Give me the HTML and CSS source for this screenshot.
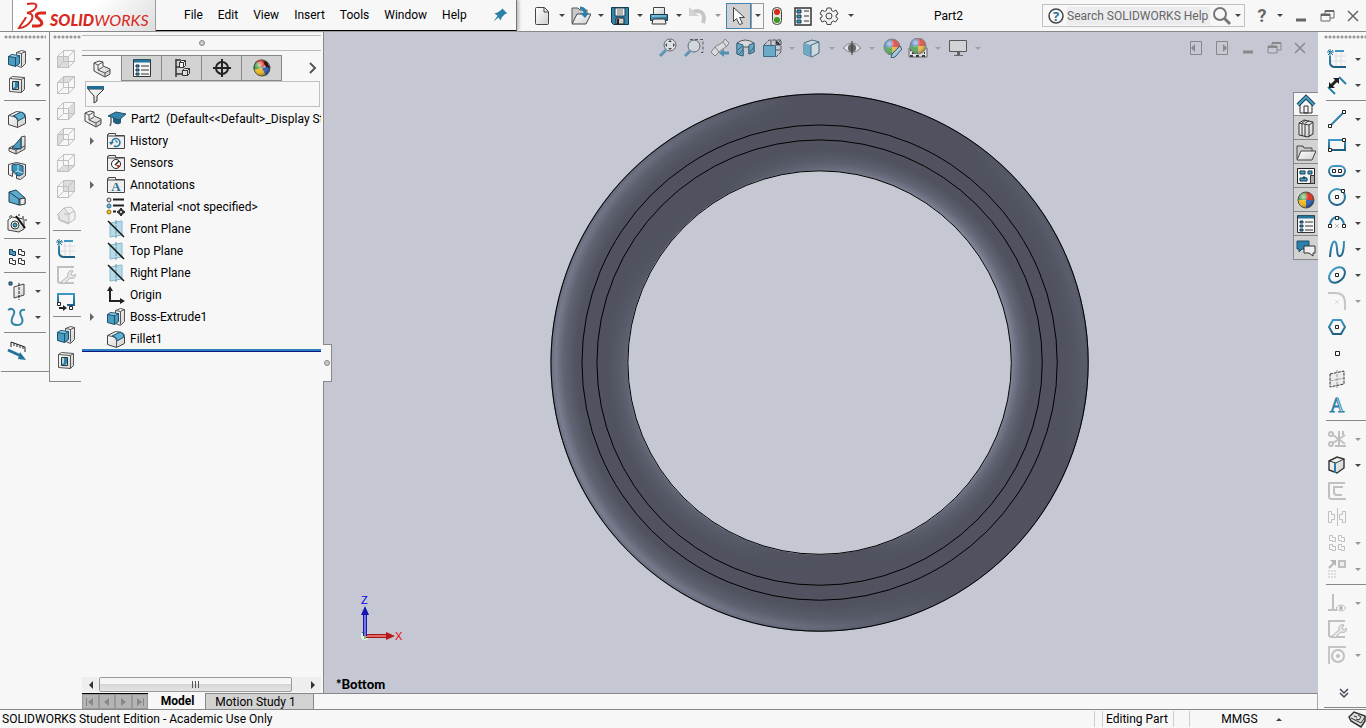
FILE: index.html
```html
<!DOCTYPE html>
<html lang="en">
<head>
  <meta charset="UTF-8" />
  <meta name="viewport" content="width=device-width, initial-scale=1.0"/>
  <title>Part2 - SOLIDWORKS</title>
  <link rel="stylesheet" href="styles.css">
</head>
<body>

<!-- icon sprite -->
<svg class="sprite" xmlns="http://www.w3.org/2000/svg">
  <defs>
    <linearGradient id="g-blue" x1="0" y1="0" x2="1" y2="1"><stop offset="0" stop-color="#5fb0d2"/><stop offset="1" stop-color="#1c6488"/></linearGradient>
    <linearGradient id="g-grey" x1="0" y1="0" x2="1" y2="1"><stop offset="0" stop-color="#ffffff"/><stop offset="1" stop-color="#cfcfcf"/></linearGradient>
    <linearGradient id="g-line" x1="0" y1="0" x2="0" y2="1"><stop offset="0" stop-color="#3f97c2"/><stop offset="1" stop-color="#1d5f83"/></linearGradient>
    <radialGradient id="g-shine" cx=".35" cy=".3" r=".7"><stop offset="0" stop-color="#fff" stop-opacity=".7"/><stop offset=".5" stop-color="#fff" stop-opacity="0"/><stop offset="1" stop-color="#000" stop-opacity=".35"/></radialGradient>
  </defs>

  <symbol id="i-extrude" viewBox="0 0 20 20">
    <path d="M9.500 3.500l5-2 4 1v12l-4 4-5-2z" fill="url(#g-grey)" stroke="#555"/><path d="M14.500 4.500v13M14.500 4.500l4-2M14.500 4.500l-5-1" fill="none" stroke="#555"/>
    <path d="M1.500 7.500l3-2 8 1v8l-4 3-7-2z" fill="#4a9dc1" stroke="#1d4f69"/><path d="M1.500 7.500l7 1 4-2M8.500 8.500v9" fill="none" stroke="#1d4f69"/><path d="M3 7l2-1 6 1-2 1z" fill="#9dd3e8"/>
  </symbol>
  <symbol id="i-cut" viewBox="0 0 20 20">
    <path d="M2.500 3.500l3-2 12 1v12l-3 3-12-1z" fill="url(#g-grey)" stroke="#555"/><path d="M2.500 3.500l12 1 3-2M14.500 4.500v13" fill="none" stroke="#555"/>
    <path d="M5.500 6.500h6v8h-6z" fill="#a9d5e6" stroke="#333"/><path d="M8 7h3v5l-2 2H6v-1l2-1z" fill="#2f83aa"/>
  </symbol>
  <symbol id="i-fillet" viewBox="0 0 20 20">
    <path d="M1.500 6.500l8-4 6 1q3 1 3 4v7l-8 4-9-3z" fill="url(#g-grey)" stroke="#444"/><path d="M1.500 6.500l5 1q4 1 4 4v7" fill="none" stroke="#555"/>
    <path d="M6 7l8-4q4 1 4 5l-7 4q0-4-5-5z" fill="#5fb0d2" stroke="#1d4f69"/>
  </symbol>
  <symbol id="i-rib" viewBox="0 0 20 20">
    <path d="M14 2l4-1v13l-9 5-7-3v-3l4-2 8 1z" fill="url(#g-grey)" stroke="#444"/><path d="M2 13l7 2 9-4M9 15v4" fill="none" stroke="#444"/><path d="M14 3v11l-9-1z" fill="#4a9dc1" stroke="#173f55"/>
  </symbol>
  <symbol id="i-shell" viewBox="0 0 20 20">
    <path d="M1.500 3.500l8-2 9 2v11l-5 4-4-1v-5l-4-1v4l-4-2z" fill="url(#g-grey)" stroke="#444"/><path d="M5 4l5-1 6 2v8l-4 2-3-1v-3l-4-1z" fill="#3c93b9" stroke="#1d4f69"/><path d="M11 4v6l5 2M11 10l-3 1" fill="none" stroke="#bfe1ee"/>
  </symbol>
  <symbol id="i-draft" viewBox="0 0 20 20">
    <path d="M2 5l7-2 9 8v6l-6 1-10-3z" fill="#5fabcc" stroke="#173f55"/><path d="M2 5l10 7 6-1M12 12v6" fill="none" stroke="#173f55"/><path d="M13 12l5-1v6l-5 1z" fill="#eee" stroke="#444"/>
  </symbol>
  <symbol id="i-wizard" viewBox="0 0 20 20">
    <path d="M1 7l4-3 12 2v10l-5 3-11-2z" fill="url(#g-grey)" stroke="#444"/><circle cx="8" cy="12" r="4" fill="#fff" stroke="#333"/><circle cx="8" cy="12" r="2" fill="#4b9fc4" stroke="#173f55"/>
    <path d="M9 3l9 12" stroke="#111" stroke-width="2"/><path d="M4 2v2M12 1v2M16 3v2M18 7h2M2 4h1" stroke="#222"/>
  </symbol>
  <symbol id="i-pattern" viewBox="0 0 20 20">
    <path d="M11.500 2.500h3v2h3v4h-3v-1h-3zM2.500 11.500h3v2h3v4h-3v-1h-3zM11.500 11.500h3v2h3v4h-3v-1h-3z" fill="none" stroke="#333"/>
    <path d="M2.500 2.500h3v2h3v4h-3v-1h-3z" fill="#4b9fc4" stroke="#173f55"/>
  </symbol>
  <symbol id="i-skpattern" viewBox="0 0 20 20">
    <path d="M2.500 2.500h3v2h3v4h-3v-1h-3zM11.500 2.500h3v2h3v4h-3v-1h-3zM2.500 11.500h3v2h3v4h-3v-1h-3zM11.500 11.500h3v2h3v4h-3v-1h-3z" fill="none" stroke="#c0c0c0"/>
  </symbol>
  <symbol id="i-refgeo" viewBox="0 0 20 20">
    <path d="M2 1h3v3H2z" fill="#3c93b9" stroke="#173f55"/><path d="M7 6l10-3v11L7 17z" fill="url(#g-grey)" stroke="#444"/><path d="M12 2v17" stroke="#222" stroke-dasharray="3 1"/>
  </symbol>
  <symbol id="i-curve" viewBox="0 0 20 20">
    <path d="M1 3c5-3 8 1 5 6-3 6-1 9 4 9 7 0 6-6 4-9-2-4 0-7 4-6" fill="none" stroke="#3584a9" stroke-width="2"/>
  </symbol>
  <symbol id="i-instant" viewBox="0 0 20 20">
    <path d="M4 6V1l14 5v5M7 2v3M10 3v3M13 4v3M16 5v3" fill="none" stroke="#222"/><path d="M1 9l13 6" stroke="#23759c" stroke-width="3"/><path d="M11 18l2-7 6 8z" fill="#23759c"/>
  </symbol>
  <symbol id="i-wire" viewBox="0 0 20 20">
    <path d="M1.500 7.500h11v11h-11zM7.500 1.500h11v11h-11zM1.500 7.500l6-6M12.500 7.500l6-6M1.500 18.500l6-6M12.500 18.500l6-6" fill="none" stroke="#c0c0c0"/>
  </symbol>
  <symbol id="i-iso" viewBox="0 0 20 20">
    <path d="M2 9l6-6 7-1 4 5v7l-7 5-9-4z" fill="#f1f1f1" stroke="#bdbdbd"/><path d="M2 9l6-6 5 6v9l-9-3z" fill="#e4e4e4" stroke="#bdbdbd"/><path d="M8 9h5M13 9l5-3" stroke="#bdbdbd"/>
  </symbol>
  <symbol id="i-sketch" viewBox="0 0 20 20">
    <path d="M7 7h12M4 12h15M9 3v15M14 3v15" stroke="#dcdcdc"/><path d="M8 2h9M3 7v6q0 5 5 5h11" fill="none" stroke="url(#g-line)" stroke-width="2"/><path d="M3 0v7M0 3h7M1 1l5 5M6 1L1 6" stroke="#23759c"/>
  </symbol>
  <symbol id="i-repair" viewBox="0 0 20 20">
    <path d="M18 2H2v14q0 2 3 2h13" fill="none" stroke="#c0c0c0" stroke-width="2"/><path d="M5 17l7-6c-1-4 2-6 5-5l-2 3 2 2 3-2c0 4-3 5-6 4l-6 6z" fill="#e6e6e6" stroke="#b5b5b5"/>
  </symbol>
  <symbol id="i-convert" viewBox="0 0 20 20">
    <path d="M2 12V3h16v11h-7" fill="none" stroke="url(#g-line)" stroke-width="2"/><path d="M1.500 11.500h3v3h-3zM13.500 15.500h3v3h-3z" fill="#fff" stroke="#222"/><path d="M3 17h5" stroke="#222" stroke-width="2"/><path d="M7 14l4 3-4 3z" fill="#222"/>
  </symbol>
  <symbol id="i-dim" viewBox="0 0 20 20">
    <path d="M12 2l7 7M1 12l7 7" stroke="#2a80a8" stroke-width="2"/><path d="M4 11l6-6" stroke="#222" stroke-width="3"/><path d="M6 3h6v6zM2 7v6h6z" fill="#222"/>
  </symbol>
  <symbol id="i-line" viewBox="0 0 20 20">
    <path d="M3 17L17 3" stroke="#2a80a8" stroke-width="2"/><path d="M1.500 15.500h3v3h-3zM15.500 1.500h3v3h-3z" fill="#fff" stroke="#222"/>
  </symbol>
  <symbol id="i-rect" viewBox="0 0 20 20">
    <path d="M2 5h16v10H2z" fill="none" stroke="url(#g-line)" stroke-width="2"/><path d="M1.500 13.500h3v3h-3zM15.500 3.500h3v3h-3z" fill="#fff" stroke="#222"/>
  </symbol>
  <symbol id="i-slot" viewBox="0 0 20 20">
    <rect x="2" y="5" width="16" height="10" rx="5" fill="none" stroke="url(#g-line)" stroke-width="2"/><path d="M5.500 8.500h3v3h-3zM11.500 8.500h3v3h-3z" fill="#fff" stroke="#222"/>
  </symbol>
  <symbol id="i-circle" viewBox="0 0 20 20">
    <circle cx="10" cy="10" r="8" fill="none" stroke="url(#g-line)" stroke-width="2"/><path d="M8.500 8.500h3v3h-3zM14.500 2.500h3v3h-3z" fill="#fff" stroke="#222"/>
  </symbol>
  <symbol id="i-arc" viewBox="0 0 20 20">
    <path d="M3 13C3 1 17 1 17 13" fill="none" stroke="#2a80a8" stroke-width="2"/><path d="M1.500 11.500h3v3h-3zM15.500 11.500h3v3h-3zM8.500 3.500h3v3h-3z" fill="#fff" stroke="#222"/><path d="M8 11l4 4M12 11l-4 4" stroke="#bbb"/>
  </symbol>
  <symbol id="i-spline" viewBox="0 0 20 20">
    <path d="M3 18C4 4 7 0 9 4s0 12 3 13c4 1 5-8 5-15" fill="none" stroke="url(#g-line)" stroke-width="2"/>
  </symbol>
  <symbol id="i-ellipse" viewBox="0 0 20 20">
    <ellipse cx="10" cy="10" rx="9" ry="6.500" transform="rotate(-42 10 10)" fill="none" stroke="url(#g-line)" stroke-width="2"/><path d="M8.500 8.500h3v3h-3z" fill="#fff" stroke="#222"/>
  </symbol>
  <symbol id="i-skfillet" viewBox="0 0 20 20">
    <path d="M1 2h7q10 0 10 10v7" fill="none" stroke="#c6c6c6" stroke-width="2"/><path d="M8 9l4 4M12 9l-4 4" stroke="#ddd"/>
  </symbol>
  <symbol id="i-polygon" viewBox="0 0 20 20">
    <path d="M2 10l4-7h8l4 7-4 7H6z" fill="none" stroke="url(#g-line)" stroke-width="2"/><path d="M8.500 8.500h3v3h-3z" fill="#fff" stroke="#222"/>
  </symbol>
  <symbol id="i-point" viewBox="0 0 20 20"><path d="M8.500 8.500h4v4h-4z" fill="#fff" stroke="#222"/></symbol>
  <symbol id="i-plane" viewBox="0 0 20 20">
    <path d="M3 5l14-3v13L3 18z" fill="#ececec" stroke="#333" stroke-dasharray="3 1"/><path d="M10 1v18M3 12l14-3" stroke="#999" stroke-dasharray="3 1"/>
  </symbol>
  <symbol id="i-trim" viewBox="0 0 20 20">
    <g fill="none" stroke="#c0c0c0" stroke-width="2"><circle cx="4" cy="5" r="2"/><circle cx="4" cy="15" r="2"/><path d="M6 6l12 9M6 14l12-8M12 2v16M8 17h11M16 2v4"/></g>
  </symbol>
  <symbol id="i-box" viewBox="0 0 20 20">
    <path d="M2 6l8-4 7 2v9l-7 5-8-3z" fill="url(#g-grey)" stroke="#333" stroke-width="1.400"/><path d="M2 6l7 2 8-4" fill="none" stroke="#333"/><path d="M8 8v10" stroke="#2a80a8" stroke-width="2"/>
  </symbol>
  <symbol id="i-offset" viewBox="0 0 20 20">
    <path d="M18 2H2v14q0 2 3 2h14M16 6H7v5q0 3 3 3h5" fill="none" stroke="#c0c0c0" stroke-width="2"/>
  </symbol>
  <symbol id="i-mirror" viewBox="0 0 20 20">
    <path d="M10.500 1v18M1.500 4.500h3v3h3v5h-3v3h-3zM18.500 4.500h-3v3h-3v5h3v3h3z" fill="none" stroke="#c0c0c0"/>
  </symbol>
  <symbol id="i-move" viewBox="0 0 20 20">
    <path d="M2 9l6-6" stroke="#b5b5b5" stroke-width="2"/><path d="M3 1h6v6z" fill="#b5b5b5"/><path d="M12 2h6v6h-6z" fill="#eee" stroke="#c0c0c0" stroke-width="2"/><path d="M1 12h9M1 15h9M1 18h9" stroke="#ddd" stroke-width="2" stroke-dasharray="2 1"/>
  </symbol>
  <symbol id="i-relations" viewBox="0 0 20 20">
    <path d="M6 1v15M1 17h9" stroke="#c0c0c0" stroke-width="2"/><path d="M9 15q5-6 10 0-5 6-10 0z" fill="#fff" stroke="#bbb"/><circle cx="14" cy="15" r="2" fill="#b5b5b5"/>
  </symbol>
  <symbol id="i-snap" viewBox="0 0 20 20">
    <path d="M2 19V2h17" fill="none" stroke="#c6c6c6" stroke-width="2"/><circle cx="11" cy="11" r="6" fill="none" stroke="#c0c0c0" stroke-width="2"/><circle cx="11" cy="11" r="2" fill="#c0c0c0"/>
  </symbol>

  <symbol id="i-new" viewBox="0 0 20 20"><path d="M3.500 2.500q0-1 1-1h8l4 4v12q0 1-1 1h-11q-1 0-1-1z" fill="url(#g-grey)" stroke="#444"/><path d="M12 2v4h4" fill="none" stroke="#444"/></symbol>
  <symbol id="i-open" viewBox="0 0 20 20">
    <path d="M1 17V2h6l2 2h7v4" fill="#c9c9c9" stroke="#555"/><path d="M1 18l5-10h14l-5 10z" fill="url(#g-grey)" stroke="#444"/><path d="M9 2q5 0 5 5" fill="none" stroke="#2a80a8" stroke-width="3"/><path d="M9 7h9l-4 5z" fill="#2a80a8"/>
  </symbol>
  <symbol id="i-save" viewBox="0 0 20 20">
    <path d="M1.500 1.500h17v17h-15l-2-2z" fill="#3485ac" stroke="#143c50"/><path d="M5 2h10v8H5z" fill="#f2f2f2" stroke="#143c50"/><path d="M7 4h6M7 6h6M7 8h6" stroke="#777"/><path d="M6 12h8v6H6z" fill="#cfcfcf" stroke="#222"/><path d="M8 13v5" stroke="#222" stroke-width="2"/>
  </symbol>
  <symbol id="i-print" viewBox="0 0 20 20">
    <path d="M4.500 1.500h11v7h-11z" fill="url(#g-grey)" stroke="#444"/><path d="M1.500 8.500h17v6h-17z" fill="url(#g-blue)" stroke="#143c50"/><path d="M4 13h12l1 5H3z" fill="#eee" stroke="#333"/><path d="M3 10h14" stroke="#a4d3e6"/>
  </symbol>
  <symbol id="i-undo" viewBox="0 0 20 20"><path d="M5 6c8-3 13 2 10 11" fill="none" stroke="#c6c6c6" stroke-width="4"/><path d="M1 1v9h10z" fill="#d2d2d2"/></symbol>
  <symbol id="i-cursor" viewBox="0 0 20 20"><path d="M4.500 1.500v14l3-3 3 6 3-1-3-6h5z" fill="#fff" stroke="#444"/></symbol>
  <symbol id="i-traffic" viewBox="0 0 20 20"><rect x="5.500" y="1.500" width="9" height="17" rx="4" fill="#e3e3e3" stroke="#444"/><circle cx="10" cy="6" r="3" fill="#d62a12"/><circle cx="10" cy="14" r="3" fill="#3a9a1c"/></symbol>
  <symbol id="i-options" viewBox="0 0 20 20">
    <path d="M2 2h16v17H2z" fill="#f5f5f5" stroke="#333" stroke-width="1.500"/><path d="M4 4h4v3H4zM4 9h4v3H4zM4 14h4v3H4z" fill="#3c93b9" stroke="#173f55"/><path d="M11 5h5M11 10h5M11 15h5" stroke="#333"/>
  </symbol>
  <symbol id="i-gear" viewBox="0 0 20 20">
    <path d="M8 2h4l.5 2.500 2 1L17 4l2 4-2 1v2l2 1.500-2.500 3.500-2-1-2 1-.5 2.500H8L7.500 16l-2-1-2.500 1-2-4L3 11V9L1 8l2-4 2.500 1.500 2-1z" fill="#f2f2f2" stroke="#444"/><circle cx="10" cy="10" r="3" fill="none" stroke="#444"/>
  </symbol>
  <symbol id="i-pin" viewBox="0 0 20 20"><path d="M11 4l2-2 6 6-3 1-4 4-1 4-3-4-6 5 5-7-4-3 4-1z" fill="#2a80a8"/></symbol>
  <symbol id="i-search" viewBox="0 0 20 20"><circle cx="8" cy="8" r="6" fill="none" stroke="#777" stroke-width="2"/><path d="M12 12l6 6" stroke="#777" stroke-width="3"/></symbol>
  <symbol id="i-min" viewBox="0 0 20 20"><path d="M5 14h10" stroke="currentColor" stroke-width="3"/></symbol>
  <symbol id="i-restore" viewBox="0 0 20 20"><path d="M8 8V5h9v7h-4" fill="none" stroke="currentColor"/><path d="M4 8h9v7H4z" fill="none" stroke="currentColor"/><path d="M4 9h9M8 5h9" stroke="currentColor" stroke-width="2"/></symbol>
  <symbol id="i-close" viewBox="0 0 20 20"><path d="M5 5l10 10M15 5L5 15" stroke="currentColor" stroke-width="1.500"/></symbol>
  <symbol id="i-prevdoc" viewBox="0 0 20 20"><path d="M4.500 3.500h11v13h-11z" fill="none" stroke="currentColor"/><path d="M9 6v8l-4-4z" fill="currentColor"/></symbol>
  <symbol id="i-nextdoc" viewBox="0 0 20 20"><path d="M4.500 3.500h11v13h-11z" fill="none" stroke="currentColor"/><path d="M11 6v8l4-4z" fill="currentColor"/></symbol>

  <symbol id="i-part" viewBox="0 0 20 20">
    <path d="M2 4l5-2 4 1v4l7 3v5l-5 3-11-6z" fill="url(#g-grey)" stroke="#444"/><path d="M2 4l4 2 5-3M6 6v5l7 3 5-3M13 14v4M6 11l5-3" fill="none" stroke="#555"/>
  </symbol>
  <symbol id="i-prop" viewBox="0 0 20 20">
    <path d="M1.500 1.500h17v17h-17z" fill="#f5f5f5" stroke="#333"/><path d="M2 3h16" stroke="#23759c" stroke-width="3"/><path d="M4 7h3v2H4zM4 11h3v2H4zM4 15h3v2H4z" fill="#3c93b9" stroke="#173f55"/><path d="M9 8h8M9 12h8M9 16h8" stroke="#333"/>
  </symbol>
  <symbol id="i-config" viewBox="0 0 20 20">
    <path d="M4 1v18M4 2h5M4 9h3M4 16h6" fill="none" stroke="#333" stroke-width="1.500"/><path d="M7.500 4.500l2-2h4v5l-2 2h-4zM10.500 12.500l2-2h5v5l-2 2h-5z" fill="url(#g-grey)" stroke="#333"/><path d="M7.500 4.500h4v5M11.500 4.500l2-2M10.500 12.500h5v5M15.500 12.500l2-2" fill="none" stroke="#333"/>
  </symbol>
  <symbol id="i-target" viewBox="0 0 20 20"><circle cx="10" cy="10" r="6" fill="none" stroke="#222" stroke-width="2"/><path d="M10 1v18M1 10h18" stroke="#222" stroke-width="2"/></symbol>
  <symbol id="i-ball" viewBox="0 0 20 20">
    <path d="M10 10V2a8 8 0 0 0-8 8z" fill="#3b9a3a"/><path d="M10 10V2a8 8 0 0 1 8 8z" fill="#d9301f"/><path d="M10 10H2a8 8 0 0 0 8 8z" fill="#f0b91d"/><path d="M10 10h8a8 8 0 0 1-8 8z" fill="#2e63b8"/><circle cx="10" cy="10" r="8" fill="url(#g-shine)" stroke="#555"/>
  </symbol>
  <symbol id="i-ballscene" viewBox="0 0 20 20">
    <path d="M10 10V2a8 8 0 0 0-8 8z" fill="#3e78c4"/><path d="M10 10V2a8 8 0 0 1 8 8z" fill="#e0443a"/><path d="M10 10H2a8 8 0 0 0 8 8z" fill="#4aa44a"/><path d="M10 10h8a8 8 0 0 1-8 8z" fill="#f0b93d"/><circle cx="10" cy="10" r="8" fill="url(#g-shine)" stroke="#777"/>
  </symbol>
  <symbol id="i-ballslot" viewBox="0 0 20 20">
    <path d="M10 10L4 3q-4 5-2 9z" fill="#3b9a3a"/><path d="M10 10L4 3q7-4 12 2z" fill="#d9301f"/><path d="M10 10l-8 2q3 8 12 6z" fill="#f0b91d"/><path d="M10 10l4 8q5-4 4-10z" fill="#2e63b8"/><circle cx="10" cy="10" r="8" fill="url(#g-shine)" stroke="#555"/><path d="M11 3l4 1 3 6-4-1z" fill="#2b1513"/>
  </symbol>
  <symbol id="i-funnel" viewBox="0 0 20 20"><path d="M2 5l6 7v7l3-2v-5l7-7z" fill="url(#g-grey)" stroke="#333"/><path d="M1 3.500h17" stroke="#1f6d95" stroke-width="3"/></symbol>
  <symbol id="i-cap" viewBox="0 0 20 20"><path d="M6 9v4q4 4 8 1V9z" fill="#235f80"/><path d="M1 7l8-4 10 2-7 6z" fill="#3584a9" stroke="#1d4f69"/><path d="M4 8v6l-1 3" fill="none" stroke="#666" stroke-width="1.500"/></symbol>
  <symbol id="i-folder" viewBox="0 0 20 20"><path d="M1.500 17.500v-14h1v-1h7v2h9v13z" fill="#efefef" stroke="#444"/><path d="M2 5h16" stroke="#444"/></symbol>
  <symbol id="i-history" viewBox="0 0 20 20"><use href="#i-folder"/><path d="M6 11a4 4 0 1 1 2 4" fill="none" stroke="#23759c" stroke-width="1.500"/><path d="M3 11h5l-3 3z" fill="#23759c"/><path d="M10 9v2h2" fill="none" stroke="#23759c"/></symbol>
  <symbol id="i-sensor" viewBox="0 0 20 20"><use href="#i-folder"/><circle cx="10" cy="11" r="4.500" fill="#fff" stroke="#222"/><path d="M9 12l4-4" stroke="#222" stroke-width="1.500"/><path d="M10 12h4l-2 3z" fill="#d63a1c"/></symbol>
  <symbol id="i-material" viewBox="0 0 20 20">
    <circle cx="3" cy="3" r="2" fill="#ddd" stroke="#444"/><circle cx="3" cy="9" r="2" fill="#74bade" stroke="#2a6a8a"/><circle cx="3" cy="15" r="2" fill="#f2c522" stroke="#8a6a11"/><path d="M7 2.500h11M7 8.500h11M7 14.500h3" stroke="#222" stroke-width="2"/><circle cx="15" cy="15" r="2" fill="#fff" stroke="#333" stroke-width="2"/><path d="M15 11v2M15 17v2M11 15h2M17 15h2" stroke="#333" stroke-width="2"/>
  </symbol>
  <symbol id="i-datum" viewBox="0 0 20 20"><path d="M4 4l12-2v14L4 18z" fill="#b4dbe9" stroke="#86b8cb"/><path d="M10 1v18" stroke="#78909a" stroke-dasharray="4 1"/><path d="M2 2l16 16" stroke="#111" stroke-width="1.500"/></symbol>
  <symbol id="i-origin" viewBox="0 0 20 20"><path d="M4 4v12h12" fill="none" stroke="#222" stroke-width="2"/><path d="M1 6l3-5 3 5zM14 13l5 3-5 3z" fill="#222"/></symbol>

  <symbol id="i-zoomfit" viewBox="0 0 20 20"><circle cx="12" cy="7" r="6" fill="#dfe4ea" stroke="#555"/><path d="M12 2l2 2h-4zM12 12l2-2h-4zM7 7l2-2v4zM17 7l-2-2v4z" fill="#333"/><path d="M8 12l-6 6" stroke="#4d8fb2" stroke-width="3"/></symbol>
  <symbol id="i-zoomarea" viewBox="0 0 20 20"><path d="M6 1.500h13v13h-4" fill="none" stroke="#444" stroke-dasharray="3 2"/><circle cx="10" cy="8" r="6" fill="#d4dce3" stroke="#555"/><path d="M6 13l-5 5" stroke="#4d8fb2" stroke-width="3"/></symbol>
  <symbol id="i-prevview" viewBox="0 0 20 20"><path d="M1 14l4-5 8-5 2-3 4 4-2 3-7 5-5 5z" fill="#dedede" stroke="#777"/><path d="M5 9l4 5M13 4l3 4" stroke="#777"/><path d="M12 15h7" stroke="#3c86ab" stroke-width="3"/><path d="M14 11v8l-5-4z" fill="#3c86ab"/></symbol>
  <symbol id="i-section" viewBox="0 0 20 20"><path d="M1 5q8-6 17 0v9l-5 2V9H7v9l-6-2z" fill="#dcdcdc" stroke="#444"/><path d="M1 5l6 2v11l-6-2zM18 5l-5 2v9l5-2z" fill="#5ca5c6" stroke="#1c546f"/><path d="M2 12l4-4M3 16l4-4M14 14l4-5" stroke="#1c546f"/></symbol>
  <symbol id="i-orient" viewBox="0 0 20 20"><path d="M2 7l5-5h12v12l-5 5" fill="none" stroke="#444" stroke-dasharray="4 1"/><path d="M9 2v5M14 7l5-5M14 2v5h5M14 12h5" stroke="#444"/><path d="M1.500 7.500h12v11h-12z" fill="#5ca5c6" stroke="#245d78"/></symbol>
  <symbol id="i-display" viewBox="0 0 20 20"><path d="M2 5l8-3 7 2v11l-7 4-8-3z" fill="#cfdde4" stroke="#34596b"/><path d="M2 5l7 2v12l-7-3z" fill="#5ca5c6"/><path d="M9 7l8-3M9 7v12" stroke="#34596b"/></symbol>
  <symbol id="i-eye" viewBox="0 0 20 20"><path d="M1 10q9-10 18 0-9 9-18 0z" fill="#e4e4e4" stroke="#777"/><circle cx="10" cy="10" r="4" fill="#555"/><path d="M10 3v14" stroke="#222"/></symbol>
  <symbol id="i-appear" viewBox="0 0 20 20"><use href="#i-ballscene" y="-1"/><path d="M18 8l2 3-7 8-4 1 1-4z" fill="#9bc9dd" stroke="#244b5d"/></symbol>
  <symbol id="i-scene" viewBox="0 0 20 20"><path d="M1 10h18v9H1z" fill="#e7e7e7" stroke="#555"/><path d="M2 12h16M4 15h13M2 18h16" stroke="#222" stroke-width="2" stroke-dasharray="3 3"/><use href="#i-ballscene" y="-2"/></symbol>
  <symbol id="i-monitor" viewBox="0 0 20 20"><path d="M1.500 2.500h17v11h-17z" fill="#d5d5d5" stroke="#444"/><path d="M9 14h3v3H9zM6 17h9v1H6z" fill="#555"/></symbol>

  <symbol id="i-home" viewBox="0 0 20 20"><path d="M4 10v9h12v-9l-6-6z" fill="#f5f5f5" stroke="#333"/><path d="M8 12h4v7H8z" fill="none" stroke="#333"/><path d="M2 11l8-8 8 8" fill="none" stroke="#153f55" stroke-width="4"/><path d="M2 11l8-8 8 8" fill="none" stroke="#4b9fc4" stroke-width="2"/></symbol>
  <symbol id="i-library" viewBox="0 0 20 20"><path d="M3 5l5-3 9 2v12l-5 3-9-2z" fill="url(#g-grey)" stroke="#333"/><path d="M3 5l10 2 4-3M6 6v12M9 6v13M13 7v12M6 5l4-3M9 5l4-2" fill="none" stroke="#333"/></symbol>
  <symbol id="i-files" viewBox="0 0 20 20"><path d="M1 17V4h6l1 2h8v3" fill="#ccc" stroke="#444"/><path d="M1 18l4-9h15l-4 9z" fill="url(#g-grey)" stroke="#444"/></symbol>
  <symbol id="i-palette" viewBox="0 0 20 20"><path d="M1.500 2.500h17v15h-17z" fill="#f5f5f5" stroke="#222"/><path d="M4 5h5v3H4zM12 5h4v3h-4zM4 12h7v3H4zM7 11h2v1H7z" fill="#4b9fc4" stroke="#173f55"/><path d="M14.500 9.500h4v8h-4z" fill="#aaa" stroke="#333"/></symbol>
  <symbol id="i-forum" viewBox="0 0 20 20"><path d="M1 3h12v8H6l-3 3v-3H1z" fill="#2a80a8" stroke="#1b4f68"/><path d="M8 8h11v7h-2v3l-4-3H8z" fill="#eee" stroke="#333"/></symbol>
  <symbol id="i-tag" viewBox="0 0 20 20"><path d="M2 8l5-5 11 4v5l-4 6L4 12z" fill="#ddd" stroke="#333" stroke-width="1.500"/><path d="M4 9l10 5 4-6M7 7l3 1M11 6l3 2-2 3-3-1" fill="none" stroke="#333"/></symbol>
</svg>

<header class="titlebar">
  <div class="brand">
    <svg class="brand-mark" viewBox="0 0 30 28" aria-hidden="true">
      <path d="M10 2c5-1 11-1 9 3-1 3-5 5-9 6 5 0 7 3 4 8-3 4-7 7-12 7 2-4 6-8 7-11" fill="none" stroke="#d8281e" stroke-width="2"/>
      <path d="M29 11h-5c-5 0-6 3-3 5l3 3c2 3 0 5-4 5h-5" fill="none" stroke="#d8281e" stroke-width="3"/>
    </svg>
    <span class="brand-name"><b>SOLID</b>WORKS</span>
  </div>
  <nav class="menu">
    <button>File</button><button>Edit</button><button>View</button><button>Insert</button><button>Tools</button><button>Window</button><button>Help</button>
    <button class="pin" aria-label="Pin menu"><svg><use href="#i-pin"/></svg></button>
  </nav>
  <div class="quick">
    <button aria-label="New"><svg><use href="#i-new"/></svg></button><button class="drop" aria-label="New options"></button>
    <button aria-label="Open"><svg><use href="#i-open"/></svg></button><button class="drop" aria-label="Open options"></button>
    <button aria-label="Save"><svg><use href="#i-save"/></svg></button><button class="drop" aria-label="Save options"></button>
    <button aria-label="Print"><svg><use href="#i-print"/></svg></button><button class="drop" aria-label="Print options"></button>
    <button aria-label="Undo"><svg><use href="#i-undo"/></svg></button><button class="drop off" aria-label="Undo options"></button>
    <button class="picked" aria-label="Select"><svg><use href="#i-cursor"/></svg></button><button class="drop boxed" aria-label="Select options"></button>
    <button class="wide" aria-label="Rebuild"><svg><use href="#i-traffic"/></svg></button>
    <button class="wide" aria-label="File properties"><svg><use href="#i-options"/></svg></button>
    <button class="wide" aria-label="Options"><svg><use href="#i-gear"/></svg></button><button class="drop" aria-label="More options"></button>
  </div>
  <h1 class="doc-title">Part2</h1>
  <div class="search">
    <svg viewBox="0 0 20 20"><circle cx="10" cy="10" r="7" fill="#f7f7f7" stroke="#444" stroke-width="1.500"/><text x="10" y="15" text-anchor="middle" class="glyph-q">?</text></svg>
    <input type="text" placeholder="Search SOLIDWORKS Help" aria-label="Search SOLIDWORKS Help">
    <button aria-label="Search"><svg><use href="#i-search"/></svg></button>
    <button class="drop" aria-label="Search options"></button>
  </div>
  <div class="window-controls">
    <button class="help" aria-label="Help">?</button><button class="drop" aria-label="Help options"></button>
    <button aria-label="Minimize"><svg><use href="#i-min"/></svg></button>
    <button aria-label="Restore"><svg><use href="#i-restore"/></svg></button>
    <button aria-label="Close"><svg><use href="#i-close"/></svg></button>
  </div>
</header>

<main class="workspace">

  <div class="rail features">
    <div class="grip"></div>
    <div class="tool"><button aria-label="Extruded boss"><svg><use href="#i-extrude"/></svg></button><button class="drop" aria-label="More boss tools"></button></div>
    <div class="tool"><button aria-label="Extruded cut"><svg><use href="#i-cut"/></svg></button><button class="drop" aria-label="More cut tools"></button></div>
    <hr>
    <div class="tool"><button aria-label="Fillet"><svg><use href="#i-fillet"/></svg></button><button class="drop" aria-label="More fillets"></button></div>
    <div class="tool"><button aria-label="Rib"><svg><use href="#i-rib"/></svg></button></div>
    <div class="tool"><button aria-label="Shell"><svg><use href="#i-shell"/></svg></button></div>
    <div class="tool"><button aria-label="Draft"><svg><use href="#i-draft"/></svg></button></div>
    <div class="tool"><button aria-label="Hole wizard"><svg><use href="#i-wizard"/></svg></button><button class="drop" aria-label="More holes"></button></div>
    <hr>
    <div class="tool"><button aria-label="Linear pattern"><svg><use href="#i-pattern"/></svg></button><button class="drop" aria-label="More patterns"></button></div>
    <hr>
    <div class="tool"><button aria-label="Reference geometry"><svg><use href="#i-refgeo"/></svg></button><button class="drop" aria-label="More geometry"></button></div>
    <div class="tool"><button aria-label="Curves"><svg><use href="#i-curve"/></svg></button><button class="drop" aria-label="More curves"></button></div>
    <hr>
    <div class="tool"><button aria-label="Instant3D"><svg><use href="#i-instant"/></svg></button></div>
  </div>

  <div class="rail views">
    <div class="grip"></div>
    <div class="tool"><button aria-label="Front"><svg viewBox="0 0 20 20"><path class="face" d="M2 8h11v11H2z"/><use href="#i-wire"/></svg></button></div>
    <div class="tool"><button aria-label="Top"><svg viewBox="0 0 20 20"><path class="face" d="M2 7l6-5h11l-6 5z"/><use href="#i-wire"/></svg></button></div>
    <div class="tool"><button aria-label="Right"><svg viewBox="0 0 20 20"><path class="face" d="M13 8l6-6v11l-6 6z"/><use href="#i-wire"/></svg></button></div>
    <div class="tool"><button aria-label="Left"><svg viewBox="0 0 20 20"><path class="face" d="M2 8l6-6v11l-6 6z"/><use href="#i-wire"/></svg></button></div>
    <div class="tool"><button aria-label="Bottom"><svg viewBox="0 0 20 20"><path class="face" d="M2 18l6-5h11l-6 5z"/><use href="#i-wire"/></svg></button></div>
    <div class="tool"><button aria-label="Back"><svg viewBox="0 0 20 20"><path class="face" d="M8 2h11v11H8z"/><use href="#i-wire"/></svg></button></div>
    <div class="tool"><button aria-label="Isometric"><svg><use href="#i-iso"/></svg></button></div>
    <hr>
    <div class="tool"><button aria-label="Sketch"><svg><use href="#i-sketch"/></svg></button></div>
    <div class="tool"><button aria-label="Repair sketch"><svg><use href="#i-repair"/></svg></button></div>
    <div class="tool"><button aria-label="Convert entities"><svg><use href="#i-convert"/></svg></button></div>
    <hr>
    <div class="tool"><button aria-label="Extruded boss"><svg><use href="#i-extrude"/></svg></button></div>
    <div class="tool"><button aria-label="Extruded cut"><svg><use href="#i-cut"/></svg></button></div>
  </div>

  <div class="document">
    <div class="split">
      <aside class="manager">
        <div class="splitter"><i class="dot"></i></div>
        <div class="manager-tabs">
          <button class="active" aria-label="Feature tree"><svg><use href="#i-part"/></svg></button>
          <button aria-label="Properties"><svg><use href="#i-prop"/></svg></button>
          <button aria-label="Configurations"><svg><use href="#i-config"/></svg></button>
          <button aria-label="DimXpert"><svg><use href="#i-target"/></svg></button>
          <button aria-label="Display manager"><svg><use href="#i-ballslot"/></svg></button>
          <button class="more" aria-label="More tabs"><svg viewBox="0 0 20 20"><path d="M8 5l5 5-5 5" fill="none" stroke="#555" stroke-width="2"/></svg></button>
        </div>
        <label class="filter"><svg><use href="#i-funnel"/></svg><input type="text" aria-label="Filter tree"></label>
        <ul class="tree">
          <li class="root"><svg><use href="#i-part"/></svg><svg><use href="#i-cap"/></svg><span>Part2&nbsp; (Default&lt;&lt;Default&gt;_Display St</span></li>
          <li class="branch"><svg><use href="#i-history"/></svg><span>History</span></li>
          <li><svg><use href="#i-sensor"/></svg><span>Sensors</span></li>
          <li class="branch"><svg viewBox="0 0 20 20"><use href="#i-folder"/><text x="10" y="16" text-anchor="middle" class="glyph-n">A</text></svg><span>Annotations</span></li>
          <li><svg><use href="#i-material"/></svg><span>Material &lt;not specified&gt;</span></li>
          <li><svg><use href="#i-datum"/></svg><span>Front Plane</span></li>
          <li><svg><use href="#i-datum"/></svg><span>Top Plane</span></li>
          <li><svg><use href="#i-datum"/></svg><span>Right Plane</span></li>
          <li><svg><use href="#i-origin"/></svg><span>Origin</span></li>
          <li class="branch"><svg><use href="#i-extrude"/></svg><span>Boss-Extrude1</span></li>
          <li><svg><use href="#i-fillet"/></svg><span>Fillet1</span></li>
        </ul>
        <div class="rollback"></div>
        <div class="hscroll">
          <button class="left" aria-label="Scroll left"></button>
          <div class="track"><div class="thumb"><i></i><i></i><i></i></div></div>
          <button class="right" aria-label="Scroll right"></button>
        </div>
        <div class="handle"><i class="dot"></i></div>
      </aside>

      <section class="viewport">
        <svg class="model" viewBox="0 0 542 542" aria-label="Ring, bottom view">
          <defs>
            <radialGradient id="outer-roll" cx="271" cy="271" r="270" gradientUnits="userSpaceOnUse">
              <stop offset=".9" stop-color="#868b9f" stop-opacity="0"/><stop offset=".95" stop-color="#868b9f" stop-opacity=".35"/><stop offset=".98" stop-color="#868b9f" stop-opacity=".8"/><stop offset="1" stop-color="#7b8094" stop-opacity=".6"/>
            </radialGradient>
            <radialGradient id="inner-roll" cx="271" cy="271" r="223" gradientUnits="userSpaceOnUse">
              <stop offset=".864" stop-color="#8a8fa3" stop-opacity=".9"/><stop offset=".9" stop-color="#7a7f92" stop-opacity=".5"/><stop offset=".96" stop-color="#717588" stop-opacity="0"/>
            </radialGradient>
            <linearGradient id="fade-left" x1="0" y1=".65" x2="1" y2=".35"><stop offset="0" stop-color="#fff"/><stop offset=".3" stop-color="#aaa"/><stop offset=".6" stop-color="#000"/><stop offset=".85" stop-color="#000"/><stop offset="1" stop-color="#555"/></linearGradient>
            <linearGradient id="fade-right" x1="1" y1=".3" x2="0" y2=".7"><stop offset=".15" stop-color="#fff"/><stop offset=".35" stop-color="#999"/><stop offset=".55" stop-color="#000"/><stop offset=".7" stop-color="#111"/><stop offset=".85" stop-color="#777"/></linearGradient>
            <mask id="m-left"><path d="M0 0h542v542H0z" fill="url(#fade-left)"/></mask>
            <mask id="m-right"><path d="M0 0h542v542H0z" fill="url(#fade-right)"/></mask>
          </defs>
          <circle cx="271" cy="271" r="231" fill="none" stroke="#50525f" stroke-width="77"/>
          <circle cx="271" cy="271" r="254" fill="none" stroke="url(#outer-roll)" stroke-width="31" mask="url(#m-left)"/>
          <circle cx="271" cy="271" r="208" fill="none" stroke="url(#inner-roll)" stroke-width="31" mask="url(#m-right)"/>
          <g fill="none" stroke="#000">
            <circle cx="271" cy="271" r="269"/><circle cx="271" cy="271" r="238"/><circle cx="271" cy="271" r="223"/><circle cx="271" cy="271" r="192"/>
          </g>
        </svg>

        <div class="heads-up">
          <button aria-label="Zoom to fit"><svg><use href="#i-zoomfit"/></svg></button>
          <button aria-label="Zoom to area"><svg><use href="#i-zoomarea"/></svg></button>
          <button aria-label="Previous view"><svg><use href="#i-prevview"/></svg></button>
          <button aria-label="Section view"><svg><use href="#i-section"/></svg></button>
          <button aria-label="View orientation"><svg><use href="#i-orient"/></svg></button><button class="drop off" aria-label="Orientations"></button>
          <button aria-label="Display style"><svg><use href="#i-display"/></svg></button><button class="drop off" aria-label="Display styles"></button>
          <button aria-label="Hide/show items"><svg><use href="#i-eye"/></svg></button><button class="drop off" aria-label="Items"></button>
          <button aria-label="Edit appearance"><svg><use href="#i-appear"/></svg></button>
          <button aria-label="Apply scene"><svg><use href="#i-scene"/></svg></button><button class="drop off" aria-label="Scenes"></button>
          <button aria-label="View settings"><svg><use href="#i-monitor"/></svg></button><button class="drop off" aria-label="Settings"></button>
        </div>

        <div class="doc-controls">
          <button aria-label="Previous document"><svg><use href="#i-prevdoc"/></svg></button>
          <button aria-label="Next document"><svg><use href="#i-nextdoc"/></svg></button>
          <button aria-label="Minimize document"><svg><use href="#i-min"/></svg></button>
          <button aria-label="Restore document"><svg><use href="#i-restore"/></svg></button>
          <button aria-label="Close document"><svg><use href="#i-close"/></svg></button>
        </div>

        <div class="task-tabs">
          <button class="active" aria-label="Resources"><svg><use href="#i-home"/></svg></button>
          <button aria-label="Design library"><svg><use href="#i-library"/></svg></button>
          <button aria-label="File explorer"><svg><use href="#i-files"/></svg></button>
          <button aria-label="View palette"><svg><use href="#i-palette"/></svg></button>
          <button aria-label="Appearances"><svg><use href="#i-ball"/></svg></button>
          <button aria-label="Custom properties"><svg><use href="#i-prop"/></svg></button>
          <button aria-label="Forum"><svg><use href="#i-forum"/></svg></button>
        </div>

        <div class="orientation">
          <svg class="triad" viewBox="0 0 46 48" aria-label="Orientation triad">
            <circle cx="7" cy="42" r="4" fill="#e4f5e4"/><path d="M4 38l3 3v4" fill="none" stroke="#1c8a1c"/>
            <path d="M8 42h22" stroke="#a11717" stroke-width="4"/><path d="M8 42h22" stroke="#e06a6a" stroke-width="2"/><path d="M28 38l9 4-9 4z" fill="#b81616"/>
            <path d="M7 42V19" stroke="#1a1ab0" stroke-width="4"/><path d="M7 42V19" stroke="#7474e8" stroke-width="2"/><path d="M3 21l4-9 4 9z" fill="#1414b4"/>
            <text x="3" y="10" class="axis-z">Z</text><text x="37" y="46" class="axis-x">X</text>
          </svg>
          <p>*Bottom</p>
        </div>
      </section>
    </div>

    <div class="sheet-tabs">
      <div class="sheet-nav">
        <button aria-label="First"><svg viewBox="0 0 14 14"><path d="M3 3h1v8H3zM10 3v8L5 7z"/></svg></button>
        <button aria-label="Previous"><svg viewBox="0 0 14 14"><path d="M9 3v8L4 7z"/></svg></button>
        <button aria-label="Next"><svg viewBox="0 0 14 14"><path d="M5 3v8l5-4z"/></svg></button>
        <button aria-label="Last"><svg viewBox="0 0 14 14"><path d="M10 3h1v8h-1zM4 3v8l5-4z"/></svg></button>
      </div>
      <button class="sheet active">Model</button>
      <button class="sheet study">Motion Study 1</button>
      <div class="sheet-rest"></div>
    </div>
  </div>

  <div class="rail sketching">
    <div class="grip"></div>
    <div class="tool"><button aria-label="Sketch"><svg><use href="#i-sketch"/></svg></button><button class="drop" aria-label="Sketch types"></button></div>
    <div class="tool"><button aria-label="Smart dimension"><svg><use href="#i-dim"/></svg></button><button class="drop" aria-label="Dimensions"></button></div>
    <hr>
    <div class="tool"><button aria-label="Line"><svg><use href="#i-line"/></svg></button><button class="drop" aria-label="Lines"></button></div>
    <div class="tool"><button aria-label="Rectangle"><svg><use href="#i-rect"/></svg></button><button class="drop" aria-label="Rectangles"></button></div>
    <div class="tool"><button aria-label="Slot"><svg><use href="#i-slot"/></svg></button><button class="drop" aria-label="Slots"></button></div>
    <div class="tool"><button aria-label="Circle"><svg><use href="#i-circle"/></svg></button><button class="drop" aria-label="Circles"></button></div>
    <div class="tool"><button aria-label="Arc"><svg><use href="#i-arc"/></svg></button><button class="drop" aria-label="Arcs"></button></div>
    <div class="tool"><button aria-label="Spline"><svg><use href="#i-spline"/></svg></button><button class="drop" aria-label="Splines"></button></div>
    <div class="tool"><button aria-label="Ellipse"><svg><use href="#i-ellipse"/></svg></button><button class="drop" aria-label="Ellipses"></button></div>
    <div class="tool"><button aria-label="Sketch fillet"><svg><use href="#i-skfillet"/></svg></button><button class="drop off" aria-label="Sketch fillets"></button></div>
    <div class="tool"><button aria-label="Polygon"><svg><use href="#i-polygon"/></svg></button></div>
    <div class="tool"><button aria-label="Point"><svg><use href="#i-point"/></svg></button></div>
    <div class="tool"><button aria-label="Plane"><svg><use href="#i-plane"/></svg></button></div>
    <div class="tool"><button aria-label="Text"><svg viewBox="0 0 20 20"><text x="10" y="17" text-anchor="middle" class="glyph-a">A</text></svg></button></div>
    <hr>
    <div class="tool"><button aria-label="Trim"><svg><use href="#i-trim"/></svg></button><button class="drop off" aria-label="Trims"></button></div>
    <div class="tool"><button aria-label="Convert"><svg><use href="#i-box"/></svg></button><button class="drop" aria-label="Converts"></button></div>
    <div class="tool"><button aria-label="Offset"><svg><use href="#i-offset"/></svg></button></div>
    <div class="tool"><button aria-label="Mirror"><svg><use href="#i-mirror"/></svg></button></div>
    <div class="tool"><button aria-label="Sketch pattern"><svg><use href="#i-skpattern"/></svg></button><button class="drop off" aria-label="Sketch patterns"></button></div>
    <div class="tool"><button aria-label="Move"><svg><use href="#i-move"/></svg></button><button class="drop off" aria-label="Moves"></button></div>
    <hr>
    <div class="tool"><button aria-label="Relations"><svg><use href="#i-relations"/></svg></button><button class="drop off" aria-label="Relation tools"></button></div>
    <div class="tool"><button aria-label="Repair"><svg><use href="#i-repair"/></svg></button></div>
    <div class="tool"><button aria-label="Quick snaps"><svg><use href="#i-snap"/></svg></button><button class="drop off" aria-label="Snaps"></button></div>
    <button class="overflow" aria-label="More tools"><svg viewBox="0 0 20 20"><path d="M6 6l4 4 4-4M6 10l4 4 4-4" fill="none" stroke="#444a5a" stroke-width="1.500"/></svg></button>
  </div>
</main>

<footer class="status">
  <p>SOLIDWORKS Student Edition - Academic Use Only</p>
  <span class="cell gap"></span>
  <span class="cell mode">Editing Part</span>
  <span class="cell gap2"></span>
  <button class="units">MMGS</button>
  <button class="tag" aria-label="Tags"><svg><use href="#i-tag"/></svg></button>
</footer>

</body>
</html>
```

FILE: styles.css
```css
* {
  box-sizing: border-box;
}

body {
  margin: 0;
  height: 100vh;
  display: flex;
  flex-direction: column;
  overflow: hidden;
  background: #f7f7f7;
  color: #000;
  font-family: "Segoe UI", Roboto, "Open Sans", sans-serif;
  font-size: 12px;
  line-height: 16px;
}

.sprite {
  position: absolute;
  width: 0;
  height: 0;
}

button {
  margin: 0;
  padding: 0;
  border: 0;
  background: none;
  color: inherit;
  font: inherit;
  display: flex;
  align-items: center;
  justify-content: center;
}

input {
  min-width: 0;
  padding: 0;
  border: 0;
  background: none;
  font: inherit;
}

button svg,
label svg,
.search svg,
li svg {
  width: 20px;
  height: 20px;
  flex: none;
}

/* little down arrow beside a tool */
.drop::after {
  content: "";
  border: 3px solid transparent;
  border-top-color: #444;
  border-bottom: 0;
}

.drop.off::after {
  border-top-color: #999;
}

.dot {
  width: 6px;
  height: 6px;
  border: 1px solid #888;
  border-radius: 50%;
  background: #ccc;
}

.glyph-a {
  font: 20px "Liberation Serif", serif;
  fill: #fff;
  stroke: #2a80a8;
}

.glyph-n {
  font: bold 13px "Liberation Serif", serif;
  fill: #2a6f93;
}

.glyph-q {
  font: bold 13px "Open Sans", sans-serif;
  fill: #23759c;
}

/* title bar */
.titlebar {
  display: flex;
  align-items: stretch;
  height: 32px;
  flex: none;
  border-bottom: 1px solid #888;
}

.brand {
  width: 144px;
  margin-left: 12px;
  padding-left: 4px;
  display: flex;
  align-items: center;
  gap: 3px;
  border: 1px solid #999;
  border-width: 0 1px 0 1px;
  background: linear-gradient(135deg, #fff 50%, #ddd);
}

.brand-mark {
  width: 30px;
  height: 28px;
  flex: none;
}

.brand-name {
  font: italic 16px "Lato", sans-serif;
  padding-top: 7px;
  color: #d8281e;
}

.brand-name b {
  font-weight: 900;
}

.menu {
  width: 361px;
  padding-left: 21px;
  display: flex;
  border-bottom: 1px solid #000;
  border-right: 1px solid #777;
  box-shadow: 2px 0 3px #bbb;
}

.menu button {
  padding: 0 8px 0 7px;
}

.menu .pin {
  padding: 0;
  margin-left: auto;
  margin-right: 8px;
}

.menu .pin svg {
  width: 16px;
  height: 16px;
}

.quick {
  display: flex;
  align-items: center;
  margin-left: 14px;
}

.quick button {
  width: 22px;
  height: 26px;
}

.quick .drop {
  width: 17px;
}

.quick .picked {
  width: 25px;
  border: 1px solid #3c86b4;
  background: #d0d0d0;
}

.quick .boxed {
  width: 13px;
  border: 1px solid #999;
}

.quick .wide {
  width: 26px;
}

.doc-title {
  flex: 1;
  margin: 0;
  align-self: center;
  text-align: center;
  font-size: 12px;
  font-weight: 400;
  padding-right: 4px;
}

.search {
  display: flex;
  align-items: center;
  width: 203px;
  height: 23px;
  margin-top: 4px;
  padding-left: 3px;
  border: 1px solid #c0c0c0;
}

.search input {
  flex: 1;
  height: 18px;
  margin: 0 2px 0 1px;
  background: #ececef;
}

.search input::placeholder {
  color: #666;
  opacity: 1;
}

.search .drop {
  width: 12px;
}

.window-controls {
  display: flex;
  align-items: center;
  padding-left: 8px;
  color: #666;
}

.window-controls button {
  width: 26px;
  height: 26px;
}

.window-controls .help {
  width: 18px;
  font-size: 18px;
  font-weight: 700;
}

.window-controls .drop {
  width: 17px;
}

/* tool rails */
.workspace {
  flex: 1;
  min-height: 0;
  display: flex;
}

.rail {
  flex: none;
  align-self: flex-start;
}

.grip {
  height: 14px;
  background: radial-gradient(circle, #999 1px, transparent 2px) 0 3px / 4px 4px repeat-x;
}

.tool {
  display: flex;
  height: 26px;
}

.tool > button {
  width: 26px;
}

.tool .drop {
  width: 16px;
}

.rail hr {
  height: 8px;
  margin: 0;
  border: 0;
  background: linear-gradient(#888, #888) 0 2px / 100% 1px no-repeat;
}

.features {
  width: 48px;
  margin-left: 1px;
  padding: 0 3px 7px;
  border-bottom: 1px solid #888;
}

.views {
  width: 32px;
  padding: 0 0 7px 3px;
  border-left: 1px solid #888;
  border-bottom: 1px solid #888;
}

.face {
  fill: #dcdcdc;
}

.sketching {
  align-self: stretch;
  display: flex;
  flex-direction: column;
  width: 48px;
  padding: 0 0 1px 6px;
}

.sketching .tool,
.sketching hr,
.sketching .grip {
  flex: none;
}

.sketching hr {
  margin-left: 2px;
}

.sketching .overflow {
  flex: 1;
  padding-top: 10px;
  padding-right: 2px;
  border-bottom: 1px solid #888;
}

/* document area */
.document {
  flex: 1;
  min-width: 0;
  display: flex;
  flex-direction: column;
}

.split {
  flex: 1;
  min-height: 0;
  display: flex;
}

.manager {
  position: relative;
  width: 243px;
  flex: none;
  display: flex;
  flex-direction: column;
  padding: 3px 2px 1px 1px;
  border-right: 1px solid #888;
}

.splitter {
  height: 16px;
  display: flex;
  align-items: center;
  justify-content: center;
  border: 1px solid #bbb;
  border-width: 1px 0;
}

.manager-tabs {
  display: flex;
  height: 26px;
  margin-top: 4px;
  background: linear-gradient(#888, #888) 0 0 / 200px 1px no-repeat;
}

.manager-tabs button {
  width: 40px;
  border: 1px solid #888;
  border-left: 0;
  background: #d2d2d2;
}

.manager-tabs .active {
  background: #f7f7f7;
  border-bottom: 0;
}

.manager-tabs .more {
  margin-left: auto;
  width: 18px;
  border: 0;
  background: none;
}

.filter {
  display: flex;
  align-items: center;
  height: 26px;
  margin-left: 3px;
  margin-right: 1px;
  border: 1px solid #c0c0c0;
}

.filter input {
  flex: 1;
}

.tree {
  list-style: none;
  margin: 1px 0 0;
  padding: 0;
  overflow: hidden;
}

.tree li {
  display: flex;
  align-items: center;
  gap: 4px;
  height: 22px;
  padding-left: 24px;
  white-space: nowrap;
}

.tree .root {
  padding-left: 1px;
}

.tree .branch {
  padding-left: 8px;
}

.tree .branch::before {
  content: "";
  width: 12px;
  height: 8px;
  background: linear-gradient(#666, #666);
  clip-path: polygon(0 0, 4px 50%, 0 100%);
}

.rollback {
  height: 3px;
  margin-top: -1px;
  background: #2a80c0;
  border-bottom: 1px solid #141480;
}

.hscroll {
  display: flex;
  height: 15px;
  margin-top: auto;
  background: #eee;
}

.hscroll button {
  width: 17px;
}

.hscroll button::after {
  content: "";
  border: 4px solid transparent;
}

.hscroll .left::after {
  border-right-color: #333;
  border-left: 0;
}

.hscroll .right::after {
  border-left-color: #333;
  border-right: 0;
}

.track {
  flex: 1;
}

.thumb {
  width: 94%;
  height: 15px;
  display: flex;
  align-items: center;
  justify-content: center;
  gap: 2px;
  border: 1px solid #999;
  border-radius: 2px;
  background: linear-gradient(#f5f5f5 50%, #d6d6d6 50%, #e4e4e4);
}

.thumb i {
  width: 1px;
  height: 7px;
  background: #555;
}

.handle {
  position: absolute;
  left: 242px;
  top: 312px;
  width: 9px;
  height: 38px;
  display: flex;
  align-items: center;
  justify-content: center;
  border: 1px solid #888;
  border-left: 0;
  background: #f7f7f7;
  z-index: 1;
}

.viewport {
  position: relative;
  flex: 1;
  min-width: 0;
  padding: 1px 3px 0 0;
  display: flex;
  align-items: center;
  justify-content: center;
  background: #c5c8d3;
}

.model {
  height: 82%;
}

/* overlays on the model view */
.heads-up {
  position: absolute;
  top: 3px;
  left: 50%;
  transform: translateX(-50%);
  display: flex;
  padding-right: 2px;
  opacity: .85;
}

.heads-up button {
  width: 26px;
  height: 26px;
}

.heads-up .drop {
  width: 14px;
}

.doc-controls {
  position: absolute;
  top: 3px;
  right: 5px;
  display: flex;
  color: #888;
}

.doc-controls button {
  width: 26px;
  height: 26px;
}

.task-tabs {
  position: absolute;
  top: 60px;
  right: 0;
  width: 25px;
  border: 1px solid #888;
  border-width: 1px 0 0 1px;
}

.task-tabs button {
  width: 24px;
  height: 24px;
  background: #d2d2d2;
  border-bottom: 1px solid #888;
}

.task-tabs .active {
  height: 23px;
  background: #f7f7f7;
}

.orientation {
  position: absolute;
  left: 12px;
  bottom: 0;
}

.orientation p {
  margin: 33px 0 0;
  font: 900 13px/18px "Lato", sans-serif;
}

.triad {
  display: block;
  width: 46px;
  height: 48px;
  margin-left: 22px;
}

.axis-z,
.axis-x {
  font: 11px "Liberation Sans", sans-serif;
  fill: #0000f0;
}

.axis-x {
  fill: #f00000;
}

/* sheet tabs */
.sheet-tabs {
  display: flex;
  height: 16px;
  padding-left: 1px;
  flex: none;
}

.sheet-nav {
  display: flex;
  width: 66px;
  border-top: 1px solid #000;
  background: #b4b4b4;
}

.sheet-nav button {
  flex: 1;
  border: 1px solid #999;
}

.sheet-nav svg {
  width: 14px;
  height: 14px;
  fill: #888;
}

.sheet {
  width: 57px;
  padding-left: 2px;
}

.sheet.active {
  font-weight: 700;
}

.sheet.study {
  width: 109px;
  padding-right: 10px;
  border: 1px solid #888;
  border-bottom: 0;
  background: #d2d2d2;
}

.sheet-rest {
  flex: 1;
  border-top: 1px solid #888;
  border-right: 1px solid #9ab;
}

/* status bar */
.status {
  flex: none;
  display: flex;
  align-items: center;
  height: 19px;
  padding-left: 2px;
  border-top: 1px solid #888;
}

.status p {
  flex: 1;
  margin: 0;
}

.cell {
  height: 16px;
  border-left: 1px solid #ccc;
}

.gap {
  width: 8px;
}

.mode {
  width: 71px;
  padding-left: 3px;
  white-space: nowrap;
}

.gap2 {
  width: 16px;
}

.units {
  width: 158px;
  height: 16px;
  gap: 18px;
  padding-right: 34px;
  border-left: 1px solid #ccc;
}

.units::after {
  content: "";
  border: 3px solid transparent;
  border-bottom-color: #444;
  border-top: 0;
}

.tag {
  width: 19px;
}
```
